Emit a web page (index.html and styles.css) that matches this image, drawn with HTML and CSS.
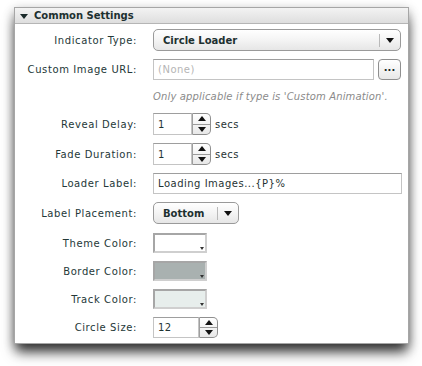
FILE: index.html
```html
<!DOCTYPE html>
<html>
<head>
<meta charset="utf-8">
<link rel="stylesheet" href="styles.css">
</head>
<body>
<div class="page">
<div class="panel">
  <div class="header"><span class="tri"></span><span class="title">Common Settings</span></div>
  <div class="body">
    <div class="row h22">
      <div class="label">Indicator Type:</div>
      <div class="select wide"><span class="sel-text">Circle Loader</span><span class="sel-btn"><span class="arrow"></span></span></div>
    </div>
    <div class="row h21">
      <div class="label">Custom Image URL:</div>
      <div class="input url placeholder">(None)</div>
      <div class="dots">...</div>
    </div>
    <div class="row hint-row">
      <div class="label"></div>
      <div class="hint">Only applicable if type is 'Custom Animation'.</div>
    </div>
    <div class="row h22">
      <div class="label">Reveal Delay:</div>
      <div class="num"><div class="input n1">1</div><div class="spin"><span class="up"><span class="uarr"></span></span><span class="down"><span class="darr"></span></span></div></div>
      <span class="unit">secs</span>
    </div>
    <div class="row h22">
      <div class="label">Fade Duration:</div>
      <div class="num"><div class="input n1">1</div><div class="spin"><span class="up"><span class="uarr"></span></span><span class="down"><span class="darr"></span></span></div></div>
      <span class="unit">secs</span>
    </div>
    <div class="row h21">
      <div class="label">Loader Label:</div>
      <div class="input full">Loading Images...{P}%</div>
    </div>
    <div class="row h22">
      <div class="label">Label Placement:</div>
      <div class="select small"><span class="sel-text">Bottom</span><span class="sel-btn"><span class="arrow"></span></span></div>
    </div>
    <div class="row h20 extra">
      <div class="label">Theme Color:</div>
      <div class="swatch" style="background:#ffffff"><span class="sw-arrow"></span></div>
    </div>
    <div class="row h20">
      <div class="label">Border Color:</div>
      <div class="swatch" style="background:#a9b1b0"><span class="sw-arrow"></span></div>
    </div>
    <div class="row h20">
      <div class="label">Track Color:</div>
      <div class="swatch" style="background:#e7eeec"><span class="sw-arrow"></span></div>
    </div>
    <div class="row h21">
      <div class="label">Circle Size:</div>
      <div class="num"><div class="input n2">12</div><div class="spin"><span class="up"><span class="uarr"></span></span><span class="down"><span class="darr"></span></span></div></div>
    </div>
  </div>
</div>
</div>
</body>
</html>
```
FILE: styles.css
```css
html, body {
  margin: 0;
  padding: 0;
  background: #ffffff;
}
body {
  font-family: "DejaVu Sans", Verdana, sans-serif;
  font-size: 10px;
  color: #1f3333;
}
.page {
  width: 422px;
  height: 366px;
  padding: 7px 0 0 14px;
  box-sizing: border-box;
  overflow: hidden;
}
.panel {
  width: 393px;
  height: 335px;
  border: 1px solid #a6a6a6;
  background: #ffffff;
  box-shadow: 0 10px 12px -2px rgba(0,0,0,0.75), 0 3px 10px rgba(0,0,0,0.3);
}
.header {
  height: 15px;
  border-bottom: 1px solid #b5b5b5;
  background: linear-gradient(#f3f3f3, #dedede);
  display: flex;
  align-items: center;
  padding-left: 5px;
}
.tri {
  width: 0;
  height: 0;
  border-left: 4px solid transparent;
  border-right: 4px solid transparent;
  border-top: 5px solid #1a2a2a;
  margin-right: 6px;
  margin-top: 1px;
}
.title {
  font-weight: bold;
  color: #1d3030;
  font-size: 10px;
}
.body {
  display: flex;
  flex-direction: column;
  gap: 8px;
  padding-top: 5px;
}
.row {
  display: flex;
  align-items: center;
}
.h22 { height: 22px; }
.h21 { height: 21px; }
.h20 { height: 20px; }
.hint-row { height: 17px; }
.extra { margin-top: 1px; }
.label {
  width: 122px;
  flex: none;
  text-align: right;
  margin-right: 16px;
  letter-spacing: 0.6px;
  white-space: nowrap;
  color: #243838;
}
.select {
  height: 20px;
  border: 1px solid #9a9a9a;
  border-radius: 5px;
  background: linear-gradient(#ffffff, #f4f4f4 50%, #e6e6e6);
  display: flex;
  align-items: center;
  box-sizing: content-box;
}
.select.wide { width: 246px; }
.select.small { width: 84px; }
.sel-text {
  flex: 1;
  font-weight: bold;
  padding-left: 9px;
  color: #1d3030;
}
.sel-btn {
  width: 20px;
  height: 13px;
  border-left: 1px solid #b9b9b9;
  display: flex;
  align-items: center;
  justify-content: center;
}
.arrow {
  width: 0;
  height: 0;
  border-left: 4px solid transparent;
  border-right: 4px solid transparent;
  border-top: 5px solid #111;
}
.input {
  box-sizing: border-box;
  border: 1px solid #c4c4c4;
  border-top-color: #9e9e9e;
  background: #fff;
  display: flex;
  align-items: center;
  padding-left: 4px;
  letter-spacing: 0.5px;
  color: #1f3333;
}
.url {
  width: 221px;
  height: 21px;
}
.placeholder { color: #b5b5b5; }
.dots {
  width: 23px;
  height: 21px;
  box-sizing: border-box;
  margin-left: 4px;
  border: 1px solid #8f8f8f;
  border-radius: 4px;
  background: linear-gradient(#ffffff, #e8e8e8);
  font-weight: bold;
  text-align: center;
  line-height: 15px;
  color: #1a2a2a;
}
.hint {
  font-style: italic;
  color: #8a8a8a;
  letter-spacing: 0.15px;
  white-space: nowrap;
}
.num {
  display: flex;
  height: 100%;
}
.n1 { width: 39px; height: 100%; }
.n2 { width: 46px; height: 100%; }
.spin {
  width: 19px;
  height: 100%;
  box-sizing: border-box;
  border: 1px solid #8f8f8f;
  border-left-color: #9e9e9e;
  border-radius: 0 5px 5px 0;
  background: linear-gradient(#ffffff, #e8e8e8);
  display: flex;
  flex-direction: column;
  overflow: hidden;
}
.spin .up, .spin .down {
  flex: 1;
  display: flex;
  align-items: center;
  justify-content: center;
}
.spin .up { border-bottom: 1px solid #9a9a9a; }
.uarr {
  width: 0; height: 0;
  border-left: 4px solid transparent;
  border-right: 4px solid transparent;
  border-bottom: 5px solid #111;
}
.darr {
  width: 0; height: 0;
  border-left: 4px solid transparent;
  border-right: 4px solid transparent;
  border-top: 5px solid #111;
}
.unit {
  margin-left: 4px;
  letter-spacing: 0.5px;
}
.full {
  width: 249px;
  height: 21px;
}
.swatch {
  position: relative;
  width: 54px;
  height: 20px;
  box-sizing: border-box;
  border: 2px solid #ebebeb;
  border-top-color: #a6a6a6;
  border-left-color: #a6a6a6;
  border-right-color: #cfcfcf;
  border-bottom-color: #cfcfcf;
}
.sw-arrow {
  position: absolute;
  right: 1px;
  bottom: 1px;
  width: 0; height: 0;
  border-left: 2px solid transparent;
  border-right: 2px solid transparent;
  border-top: 3px solid #333;
}
```
